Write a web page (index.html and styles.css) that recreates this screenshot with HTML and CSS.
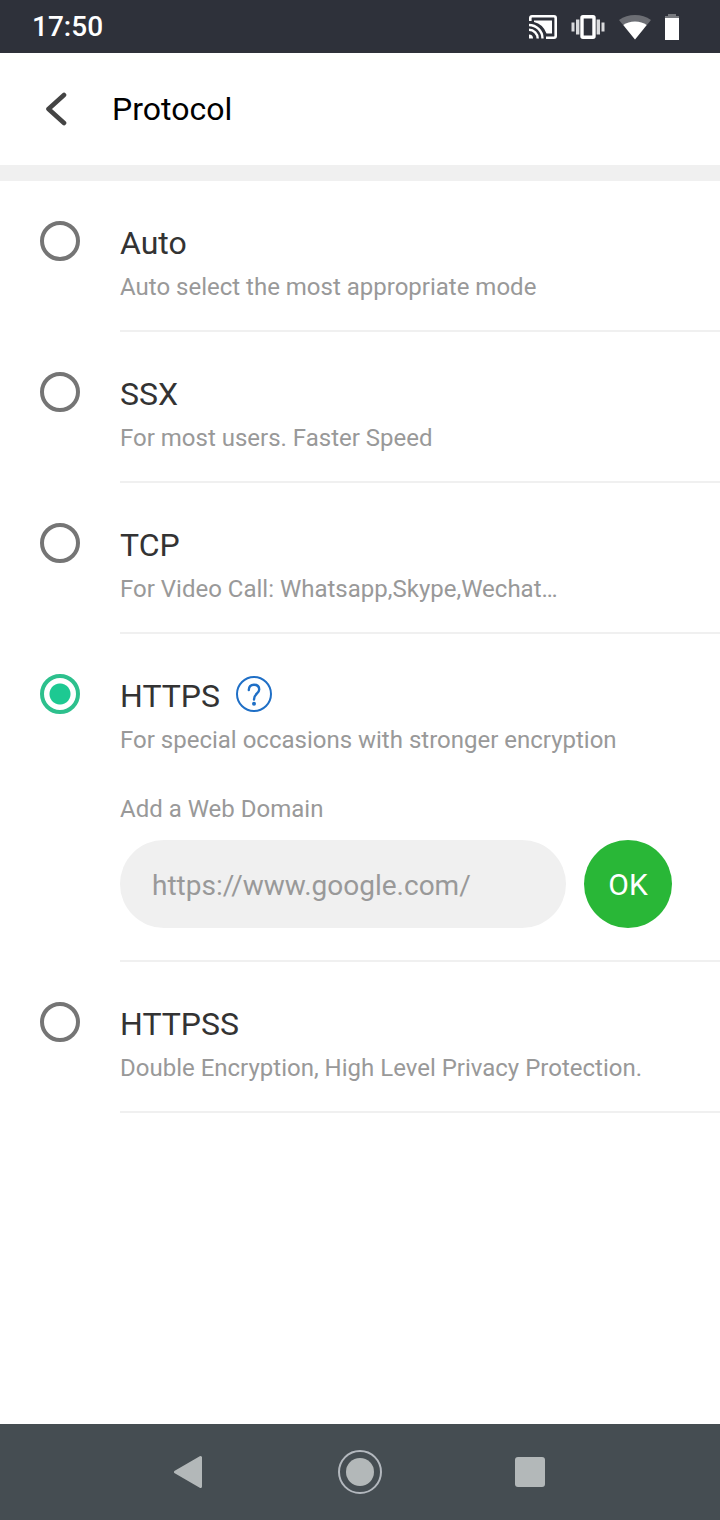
FILE: index.html
```html
<!DOCTYPE html>
<html lang="en">
  <head>
    <meta charset="UTF-8" />
    <meta name="viewport" content="width=device-width, initial-scale=1" />
    <title>Protocol</title>
    <link rel="stylesheet" href="styles.css">
  </head>
  <body>
    <div class="status-bar">
      <span class="clock">17:50</span>
      <div class="status-icons">
        <svg width="28" height="24" viewBox="0 0 28 24" fill="none" stroke="#fff">
          <path d="M1.300 6V3Q1.300 1.300 3 1.300H25Q26.700 1.300 26.700 3V21Q26.700 22.700 25 22.700H17" stroke-width="2.600" />
          <path d="M5 5.500H23V18.500H17.500Q14 9 5 7Z" fill="#fff" stroke="none" />
          <path d="M0 10A13.500 13.500 0 0 1 13.500 23.500M0 14.800A8.700 8.700 0 0 1 8.700 23.500" stroke-width="2.400" />
          <path d="M0 19.500A4 4 0 0 1 4 23.500H0Z" fill="#fff" stroke="none" />
        </svg>
        <svg width="34" height="24" viewBox="0 0 34 24">
          <rect x="11" y="1.700" width="12" height="20.600" rx="1" fill="none" stroke="#fff" stroke-width="3.400" />
          <path d="M5 4.500h3.400v15H5zM25.600 4.500H29v15h-3.400z" fill="#d9dadc" />
          <path d="M.5 7.500h3v9h-3zM30.500 7.500h3v9h-3z" fill="#d9dadc" />
        </svg>
        <svg width="32" height="26" viewBox="0 0 32 26">
          <path d="M16 25.500 0 6Q7 1 16 1T32 6Z" fill="#6c6e74" />
          <path d="M16 25.500 4.300 11Q9 7.500 16 7.500T27.700 11Z" fill="#fff" />
        </svg>
        <svg width="14" height="26" viewBox="0 0 14 26">
          <path d="M0 4V2H3V0H11V2H14V4Z" fill="#77797e" />
          <path d="M0 4H14V26H0Z" fill="#fff" />
        </svg>
      </div>
    </div>

    <header class="header">
      <button class="back" type="button" aria-label="Back">
        <svg width="24" height="34" viewBox="0 0 24 34">
          <path d="M20 3 4.500 17 20 31" fill="none" stroke="#444" stroke-width="4.600" stroke-linecap="round" stroke-linejoin="round" />
        </svg>
      </button>
      <h1>Protocol</h1>
    </header>

    <main class="options">
      <div class="option">
        <input type="radio" name="protocol" id="auto" />
        <div class="option-body">
          <label class="option-title" for="auto">Auto</label>
          <p>Auto select the most appropriate mode</p>
        </div>
      </div>
      <div class="option">
        <input type="radio" name="protocol" id="ssx" />
        <div class="option-body">
          <label class="option-title" for="ssx">SSX</label>
          <p>For most users. Faster Speed</p>
        </div>
      </div>
      <div class="option">
        <input type="radio" name="protocol" id="tcp" />
        <div class="option-body">
          <label class="option-title" for="tcp">TCP</label>
          <p>For Video Call: Whatsapp,Skype,Wechat…</p>
        </div>
      </div>
      <div class="option">
        <input type="radio" name="protocol" id="https" checked />
        <div class="option-body">
          <div class="title-row">
            <label class="option-title" for="https">HTTPS</label>
            <button class="help" type="button" aria-label="About HTTPS">
              <svg width="36" height="36" viewBox="0 0 36 36" fill="none" stroke="#1f6fc6">
                <circle cx="18" cy="18" r="17" stroke-width="2" />
                <path d="M12.800 14Q12.800 8.800 18 8.800T23.200 13.500C23.200 17.500 18 17.500 18 23.500" stroke-width="2.400" stroke-linecap="round" />
                <circle cx="18" cy="27.700" r="2" fill="#1f6fc6" stroke="none" />
              </svg>
            </button>
          </div>
          <p>For special occasions with stronger encryption</p>
          <form class="domain">
            <label for="domain">Add a Web Domain</label>
            <div class="domain-row">
              <input type="text" id="domain" placeholder="https://www.google.com/" />
              <button class="ok" type="button">OK</button>
            </div>
          </form>
        </div>
      </div>
      <div class="option">
        <input type="radio" name="protocol" id="httpss" />
        <div class="option-body">
          <label class="option-title" for="httpss">HTTPSS</label>
          <p>Double Encryption, High Level Privacy Protection.</p>
        </div>
      </div>
    </main>

    <nav class="nav-bar">
      <button type="button" aria-label="Back">
        <svg width="32" height="44" viewBox="0 0 32 44">
          <path d="M26.500 7.500V36.500L1.500 22Z" fill="#b3b8b9" stroke="#b3b8b9" stroke-width="3" stroke-linejoin="round" />
        </svg>
      </button>
      <button type="button" aria-label="Home">
        <svg width="44" height="44" viewBox="0 0 44 44">
          <circle cx="22" cy="22" r="21" fill="none" stroke="#b3b8be" stroke-width="2" />
          <circle cx="22" cy="22" r="14" fill="#b3b8b9" />
        </svg>
      </button>
      <button type="button" aria-label="Recent apps">
        <svg width="30" height="30" viewBox="0 0 30 30">
          <rect width="30" height="30" rx="3" fill="#b3b8b9" />
        </svg>
      </button>
    </nav>
  </body>
</html>
```
FILE: styles.css
```css
* {
  box-sizing: border-box;
}
body {
  display: flex;
  flex-direction: column;
  min-height: 100vh;
  margin: 0;
  font-family: Roboto, sans-serif;
  background-color: #fff;
}
h1,
p {
  margin: 0;
}
button {
  display: flex;
  align-items: center;
  justify-content: center;
  padding: 0;
  border: none;
  background: none;
  font-family: inherit;
  cursor: pointer;
}
svg {
  display: block;
}
.status-bar {
  display: flex;
  align-items: center;
  justify-content: space-between;
  height: 53px;
  padding: 0 41px 0 32px;
  background-color: #2e313a;
  color: #fff;
}
.clock {
  font-size: 28px;
  font-weight: 500;
  line-height: 54px;
}
.status-icons {
  display: flex;
  align-items: center;
  gap: 14px;
}
.header {
  display: flex;
  align-items: center;
  gap: 40px;
  height: 128px;
  padding-left: 44px;
  border-bottom: 16px solid #f0f0f0;
}
.back {
  width: 28px;
  height: 48px;
  justify-content: flex-start;
}
h1 {
  font-size: 32px;
  font-weight: 400;
  line-height: 40px;
  color: #000;
}
.options {
  flex: 1;
}
.option {
  display: flex;
  gap: 40px;
  padding-left: 40px;
}
.option input[type="radio"] {
  appearance: none;
  flex: none;
  width: 40px;
  height: 40px;
  margin: 40px 0 0;
  border: 4px solid #757575;
  border-radius: 50%;
}
.option input[type="radio"]:checked {
  border-color: #2dc08d;
  background: radial-gradient(circle, #1dc992 10px, #fff 11px);
}
.option-body {
  flex: 1;
  padding: 42px 0 27px;
  border-bottom: 2px solid #f0f0f0;
}
.option-title {
  display: block;
  font-size: 32px;
  line-height: 40px;
  color: #333;
}
.title-row {
  display: flex;
  align-items: flex-start;
  gap: 16px;
}
.option-body p {
  margin-top: 8px;
  font-size: 24px;
  line-height: 32px;
  color: #999;
}
.domain {
  padding: 37px 48px 5px 0;
}
.domain label {
  display: block;
  font-size: 24px;
  line-height: 32px;
  color: #999;
}
.domain-row {
  display: flex;
  gap: 18px;
  margin-top: 15px;
}
.domain input {
  flex: 1;
  min-width: 0;
  height: 88px;
  padding: 2px 32px 0;
  border: none;
  border-radius: 44px;
  background-color: #f0f0f0;
  font-family: inherit;
  font-size: 28px;
  color: #333;
}
.domain input::placeholder {
  color: #999;
}
.ok {
  flex: none;
  width: 88px;
  height: 88px;
  border-radius: 50%;
  background-color: #29b737;
  color: #fff;
  font-size: 30px;
}
.nav-bar {
  display: flex;
  justify-content: center;
  height: 96px;
  background-color: #454d52;
}
.nav-bar button {
  width: 170px;
}
```
